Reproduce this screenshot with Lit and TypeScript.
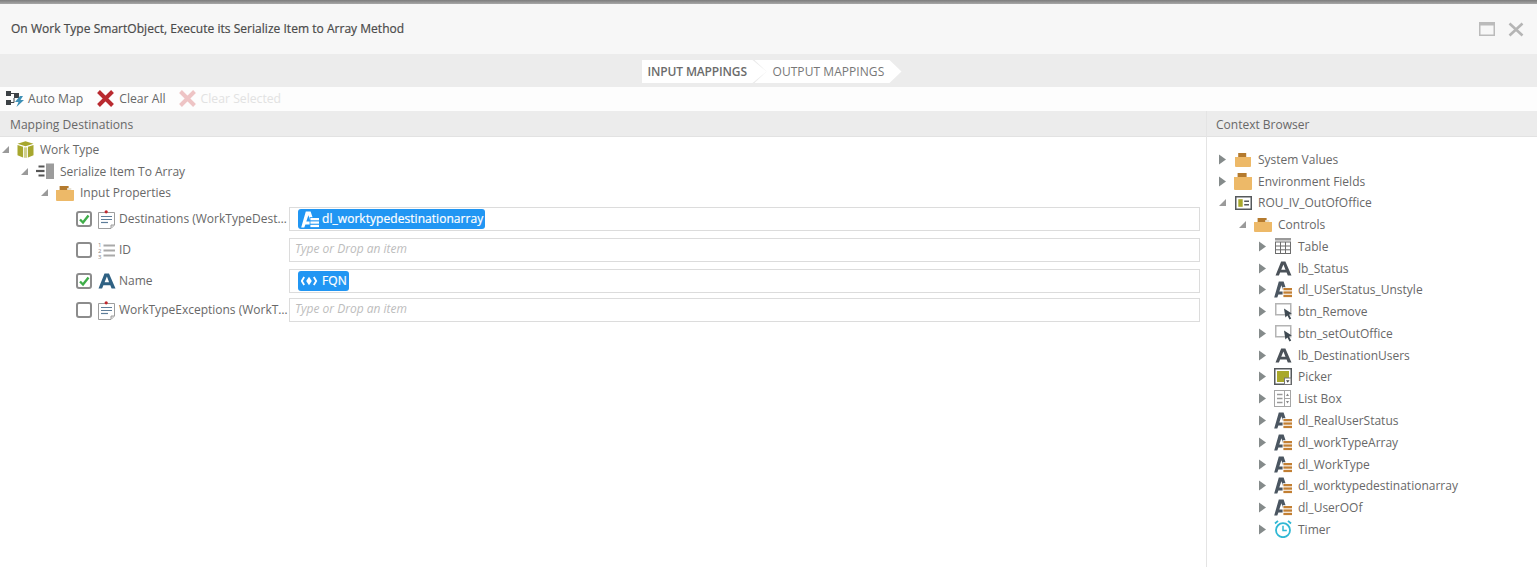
import { LitElement, html, css, svg } from "lit";
import { customElement } from "lit/decorators.js";

const ic = (w: number, h: number, body: unknown, vw = w, vh = h) =>
  html`<svg class="ic" width=${w} height=${h} viewBox="0 0 ${vw} ${vh}">${body}</svg>`;

const tri = (open: boolean) =>
  open
    ? html`<svg class="tri" width="9" height="9" viewBox="0 0 9 9"><path d="M8 1V8H1Z" fill="#9a9a9a"/></svg>`
    : html`<svg class="tri" width="9" height="11" viewBox="0 0 9 11"><path d="M1 0.5L8 5.5L1 10.5Z" fill="#858b8b"/></svg>`;

const folder = (w = 18, h = 18, open = false) =>
  ic(w, h, svg`
    <rect x="${w * 0.2}" y="1" width="${w * 0.5}" height="4" fill="#b47a2e"/>
    ${open
      ? svg`<path d="M${w * 0.62} 3H${w * 0.85}V6H${w * 0.62}Z" fill="#e9e2d2"/>`
      : ""}
    <path d="M0 5H${w}V${h - 1}Q${w} ${h} ${w - 1} ${h}H1Q0 ${h} 0 ${h - 1}Z" fill="#edb968"/>
  `);

const letterA = (c = "#4b5259", w = 17, h = 15) =>
  ic(w, h, svg`<path d="M6.5 0.5H11L17.5 15.5H13.6L12.3 12.2H5.4L4.1 15.5H0.5ZM6.6 9.2H11.1L8.9 3.6Z" fill="${c}" fill-rule="evenodd"/>`, 18, 16);

const dlBody = (c: string, bars: string, cover: string) => svg`
  <path d="M4.8 0.5H9.6L15 16.5H11.3L10.4 13.5H4.4L3.3 16.5H0.2ZM5.3 10.4H9.4L7.4 4.2Z" fill="${c}" fill-rule="evenodd"/>
  <rect x="8.6" y="6.2" width="9.4" height="11" fill="${cover}"/>
  <rect x="9.4" y="7" width="8.6" height="2.3" fill="${bars}"/>
  <rect x="9.4" y="10.4" width="8.6" height="2.3" fill="${bars}"/>
  <rect x="9.4" y="13.8" width="8.6" height="2.3" fill="${bars}"/>
`;

const dl = () => ic(18, 17, dlBody("#4b5661", "#c27f33", "#fff"));

const btnIcon = () =>
  ic(17, 17, svg`
    <rect x="0.75" y="0.75" width="15" height="11" fill="#fff" stroke="#b4b4b4" stroke-width="1.5"/>
    <path d="M9 5.5L16.8 10.5L14 11.6L16.2 15.6L14.5 16.6L12.4 12.6L10.4 14.6Z" fill="#3f4a52"/>
  `);

const table = () =>
  ic(17, 16, svg`
    <rect x="0" y="0" width="16" height="2.5" fill="#9a9a9a"/>
    <rect x="0.5" y="4" width="15" height="11.5" fill="#fff" stroke="#6d6d6d"/>
    <path d="M0.5 8H15.5M0.5 11.8H15.5M5.5 4V15.5M10.5 4V15.5" stroke="#6d6d6d" fill="none"/>
  `);

const picker = () =>
  ic(18, 17, svg`
    <rect x="0.75" y="0.75" width="16.5" height="15.5" fill="#fff" stroke="#55595c" stroke-width="1.5"/>
    <rect x="3" y="3" width="12" height="11" fill="#a9a82b"/>
    <rect x="10.5" y="10" width="6.5" height="6.5" fill="#fff" stroke="#777"/>
    <path d="M12 12.3H15.5L13.75 14.7Z" fill="#444"/>
  `);

const listBox = () =>
  ic(18, 17, svg`
    <rect x="0.5" y="0.5" width="16" height="16" fill="#fff" stroke="#a5a5a5"/>
    <path d="M10.5 0.5V16.5M10.5 8.5H16.5" stroke="#a5a5a5" fill="none"/>
    <path d="M3 4.5H8.5M3 8.5H8.5M3 12.5H8.5" stroke="#9a9a9a" stroke-width="1.4" fill="none"/>
    <path d="M12 6L13.5 3.5L15 6ZM12 11L13.5 13.5L15 11Z" fill="#888"/>
  `);

const timer = () =>
  ic(18, 18, svg`
    <circle cx="9" cy="10.2" r="7" fill="#fff" stroke="#2fb8d4" stroke-width="1.8"/>
    <path d="M9 5.8V10.6H12.8" fill="none" stroke="#2fb8d4" stroke-width="1.5"/>
    <path d="M1 3.5L4 0.8M17 3.5L14 0.8" stroke="#2fb8d4" stroke-width="1.8" fill="none"/>
  `);

const form = () =>
  ic(17, 14, svg`
    <rect x="0.75" y="0.75" width="15.5" height="12.5" fill="#fff" stroke="#55595c" stroke-width="1.5"/>
    <rect x="3.3" y="3.2" width="4.4" height="7.6" fill="#a9a82b"/>
    <path d="M9.2 5.2H14M9.2 8.8H14" stroke="#55595c" stroke-width="1.6" fill="none"/>
  `);

const cube = () =>
  ic(17, 17, svg`
    <path d="M8.5 0.3L16.5 2.8L8.5 5.3L0.5 2.8Z" fill="#a7a72e"/>
    <path d="M0.5 4L6 5.8V16.6L0.5 14.2Z" fill="#a7a72e"/>
    <path d="M16.5 4L11 5.8V16.6L16.5 14.2Z" fill="#a7a72e"/>
    <rect x="6.8" y="6.4" width="3.4" height="10.4" fill="#a7a72e" opacity="0.55"/>
  `);

const method = () =>
  ic(18, 16, svg`
    <rect x="10" y="0.5" width="8" height="15.5" fill="#9c9c9c"/>
    <path d="M2.5 3.5H8.5" stroke="#555" stroke-width="2"/>
    <path d="M0 8H8.5" stroke="#555" stroke-width="2.2"/>
    <path d="M2.5 12.5H8.5" stroke="#555" stroke-width="2"/>
  `);

const doc = () =>
  ic(17, 19, svg`
    <path d="M0.5 2.5H16.5V15L13 18.5H0.5Z" fill="#fff" stroke="#9d9d9d"/>
    <circle cx="8.2" cy="1.8" r="1.6" fill="#c0272d"/>
    <path d="M3 6.5H14M3 9.5H14" stroke="#5e7d99" stroke-width="1.2"/>
    <path d="M3 12.5H10" stroke="#5e7d99" stroke-width="1.2"/>
    <path d="M13 18V15H16" fill="#ddd" stroke="#9d9d9d"/>
  `);

const numList = () =>
  ic(18, 18, svg`
    <path d="M5.5 4.5H17M5.5 9.5H17M5.5 14.5H17" stroke="#a9a9a9" stroke-width="2"/>
    <text x="0" y="5.5" font-size="6" fill="#888" font-family="Open Sans">1</text>
    <text x="0" y="11.5" font-size="6" fill="#888" font-family="Open Sans">2</text>
    <text x="0" y="17.5" font-size="6" fill="#888" font-family="Open Sans">3</text>
  `);

const autoMap = () =>
  ic(18, 17, svg`
    <rect x="0" y="1" width="5" height="5" fill="#3d4246"/>
    <rect x="0" y="10" width="5" height="5" fill="#3d4246"/>
    <rect x="8" y="3" width="5" height="5" fill="#3d4246"/>
    <path d="M5 3.5H8M5 12.5H8V8" stroke="#3d4246" fill="none"/>
    <path d="M14 6L9 12H12.5L10.5 17L18 10H14.5L17 6Z" fill="#3d8fb5"/>
  `);

const bigX = (c: string) =>
  ic(19, 19, svg`<path d="M2.5 2.5L16.5 16.5M16.5 2.5L2.5 16.5" stroke="${c}" stroke-width="4" fill="none"/>`);

const check = (on: boolean) =>
  html`<span class="cb">${on
    ? html`<svg width="12" height="12" viewBox="0 0 12 12"><path d="M2 6.5L5 9.5L10.5 2.5" fill="none" stroke="#3fae49" stroke-width="2.4"/></svg>`
    : ""}</span>`;

const chipIconDl = ic(18, 17, dlBody("#fff", "#fff", "#2196f3"));
const chipIconFqn = ic(18, 10, svg`
  <path d="M3.2 1L0.8 5L3.2 9M12.8 1L15.2 5L12.8 9" stroke="#fff" stroke-width="1.8" fill="none"/>
  <path d="M8 0.8L10.8 5L8 9.2L5.2 5Z" fill="#fff"/>
`);

@customElement("app-root")
export class AppRoot extends LitElement {
  static styles = css`
    :host {
      display: block;
      width: 1537px;
      height: 567px;
      overflow: hidden;
      background: #fff;
      font-family: "Open Sans", sans-serif;
      font-size: 12px;
      color: #686868;
    }
    .ic { display: block; flex: none; }
    .tri { display: block; flex: none; }
    .topline {
      height: 4px;
      background: linear-gradient(#7d7d7d, #a8a8a8);
    }
    .head {
      height: 50px;
      background: #f7f7f7;
      display: flex;
      align-items: center;
      justify-content: space-between;
      padding: 0 13px 0 11px;
    }
    .title {
      font-size: 12px;
      color: #4a4a4a;
      letter-spacing: 0.03px;
      -webkit-text-stroke: 0.2px #4a4a4a;
      padding-bottom: 1px;
    }
    .winbtns { display: flex; align-items: center; gap: 13px; }
    .tabs {
      height: 33px;
      background: #ececec;
      display: flex;
      justify-content: center;
      align-items: flex-end;
      padding: 6px 0 4px;
      box-sizing: border-box;
    }
    .tabrow { display: flex; height: 23px; padding-left: 10px; margin-right: 4px; }
    .tab {
      background: #fff;
      height: 23px;
      display: flex;
      align-items: center;
      font-size: 12px;
      font-weight: 600;
      color: #6b6b6b;
      box-sizing: border-box;
    }
    .tab.one {
      width: 125px;
      padding-left: 6px;
      letter-spacing: -0.14px;
      clip-path: polygon(0 0, 111px 0, 125px 50%, 111px 100%, 0 100%);
    }
    .tab.two {
      width: 147px;
      margin-left: -12px;
      padding-left: 18px;
      font-weight: 400;
      color: #777;
      letter-spacing: 0.06px;
      clip-path: polygon(0 0, 135px 0, 147px 50%, 135px 100%, 0 100%, 12px 50%);
    }
    .toolbar {
      height: 24px;
      background: #fdfdfd;
      display: flex;
      align-items: center;
      padding: 0 0 2px 6px;
      box-sizing: border-box;
    }
    .tool { display: flex; align-items: center; gap: 4px; margin-right: 13px; font-size: 12.2px; }
    .tool.mid { margin-right: 12px; }
    .tool.dis { color: #e2e2e2; }
    .main { display: grid; grid-template-columns: 1207px 330px; height: 456px; }
    .left { border-right: 1px solid #e4e4e4; box-sizing: border-box; }
    .sec {
      height: 26px;
      background: #ececec;
      display: flex;
      align-items: center;
      padding: 2px 0 0 10px;
      font-size: 12.1px;
      border-bottom: 1px solid #e2e2e2;
      box-sizing: border-box;
    }
    .right .sec { padding-left: 9px; font-size: 12px; }
    .ltree { padding-top: 1px; }
    .r { display: flex; align-items: center; height: 22px; }
    .r .tri { margin-right: 7px; }
    .r1 { padding-left: 1px; }
    .r2 { padding-left: 20px; }
    .r3 { padding-left: 40px; height: 21px; }
    .lab { margin-left: 6px; white-space: nowrap; }
    .props { padding-top: 4px; }
    .prop {
      display: grid;
      grid-template-columns: 16px 22px 175px 911px;
      align-items: center;
      padding-left: 76px;
      height: 24px;
      margin-bottom: 7px;
    }
    .prop.tight { margin-bottom: 5px; }
    .prop > .ic { margin-left: 6px; }
    .prop .name {
      white-space: nowrap;
      padding: 0 0 2px 5px;
      box-sizing: border-box;
    }
    .cb {
      width: 16px;
      height: 16px;
      box-sizing: border-box;
      border: 2px solid #8c8c8c;
      border-radius: 3px;
      background: #fff;
      display: flex;
      align-items: center;
      justify-content: center;
    }
    .field {
      height: 24px;
      border: 1px solid #dcdcdc;
      box-sizing: border-box;
      display: flex;
      align-items: center;
      padding-left: 5px;
      background: #fff;
    }
    .ph { font-style: italic; color: #bdbdbd; padding-bottom: 3px; }
    .chip {
      height: 20px;
      background: #2196f3;
      border-radius: 3px;
      color: #fff;
      -webkit-text-stroke: 0.2px #fff;
      letter-spacing: 0.05px;
      display: flex;
      align-items: center;
      gap: 3px;
      padding: 0 2px 0 3px;
      margin-left: 3px;
    }
    .chip span { padding-bottom: 2px; }
    .rtree { padding-top: 11.45px; }
    .rr { display: flex; align-items: center; height: 21.77px; }
    .rr .slot { width: 18px; display: flex; justify-content: center; margin: 0 6px 0 7px; }
    .d0 { padding-left: 11px; }
    .d1 { padding-left: 31px; }
    .d2 { padding-left: 51px; }
  `;

  private rrow(depth: number, open: boolean, icon: unknown, text: string) {
    return html`<div class="rr d${depth}">${tri(open)}<span class="slot">${icon}</span><span>${text}</span></div>`;
  }

  render() {
    const p = (cb: boolean, icon: unknown, name: string, val: unknown, tight = false) => html`
      <div class="prop ${tight ? "tight" : ""}">${check(cb)}${icon}<span class="name">${name}</span><div class="field">${val}</div></div>`;
    return html`
      <div class="topline"></div>
      <div class="head">
        <span class="title">On Work Type SmartObject, Execute its Serialize Item to Array Method</span>
        <div class="winbtns">
          ${ic(16, 14, svg`<rect x="0.75" y="0.75" width="14.5" height="12.5" fill="none" stroke="#bbb" stroke-width="1.5"/><rect x="0" y="0" width="16" height="3.5" fill="#bbb"/>`)}
          ${ic(16, 15, svg`<path d="M1.5 1.5L14.5 13.5M14.5 1.5L1.5 13.5" stroke="#b5b5b5" stroke-width="2.6" fill="none"/>`)}
        </div>
      </div>
      <div class="tabs">
        <div class="tabrow">
          <div class="tab one">INPUT MAPPINGS</div>
          <div class="tab two">OUTPUT MAPPINGS</div>
        </div>
      </div>
      <div class="toolbar">
        <div class="tool">${autoMap()}<span>Auto Map</span></div>
        <div class="tool mid">${bigX("#b92a30")}<span>Clear All</span></div>
        <div class="tool dis">${bigX("#eec4c5")}<span>Clear Selected</span></div>
      </div>
      <div class="main">
        <div class="left">
          <div class="sec">Mapping Destinations</div>
          <div class="ltree">
            <div class="r r1">${tri(true)}${cube()}<span class="lab">Work Type</span></div>
            <div class="r r2">${tri(true)}${method()}<span class="lab">Serialize Item To Array</span></div>
            <div class="r r3">${tri(true)}${folder(18, 16, true)}<span class="lab">Input Properties</span></div>
            <div class="props">
              ${p(true, doc(), "Destinations (WorkTypeDest…", html`<div class="chip">${chipIconDl}<span>dl_worktypedestinationarray</span></div>`)}
              ${p(false, numList(), "ID", html`<span class="ph">Type or Drop an item</span>`)}
              ${p(true, letterA("#2f6183", 18, 18), "Name", html`<div class="chip">${chipIconFqn}<span>FQN</span></div>`, true)}
              ${p(false, doc(), "WorkTypeExceptions (WorkT…", html`<span class="ph">Type or Drop an item</span>`)}
            </div>
          </div>
        </div>
        <div class="right">
          <div class="sec">Context Browser</div>
          <div class="rtree">
            ${this.rrow(0, false, folder(16, 15), "System Values")}
            ${this.rrow(0, false, folder(18, 18), "Environment Fields")}
            ${this.rrow(0, true, form(), "ROU_IV_OutOfOffice")}
            ${this.rrow(1, true, folder(18, 15, true), "Controls")}
            ${this.rrow(2, false, table(), "Table")}
            ${this.rrow(2, false, letterA(), "lb_Status")}
            ${this.rrow(2, false, dl(), "dl_USerStatus_Unstyle")}
            ${this.rrow(2, false, btnIcon(), "btn_Remove")}
            ${this.rrow(2, false, btnIcon(), "btn_setOutOffice")}
            ${this.rrow(2, false, letterA(), "lb_DestinationUsers")}
            ${this.rrow(2, false, picker(), "Picker")}
            ${this.rrow(2, false, listBox(), "List Box")}
            ${this.rrow(2, false, dl(), "dl_RealUserStatus")}
            ${this.rrow(2, false, dl(), "dl_workTypeArray")}
            ${this.rrow(2, false, dl(), "dl_WorkType")}
            ${this.rrow(2, false, dl(), "dl_worktypedestinationarray")}
            ${this.rrow(2, false, dl(), "dl_UserOOf")}
            ${this.rrow(2, false, timer(), "Timer")}
          </div>
        </div>
      </div>
    `;
  }
}
